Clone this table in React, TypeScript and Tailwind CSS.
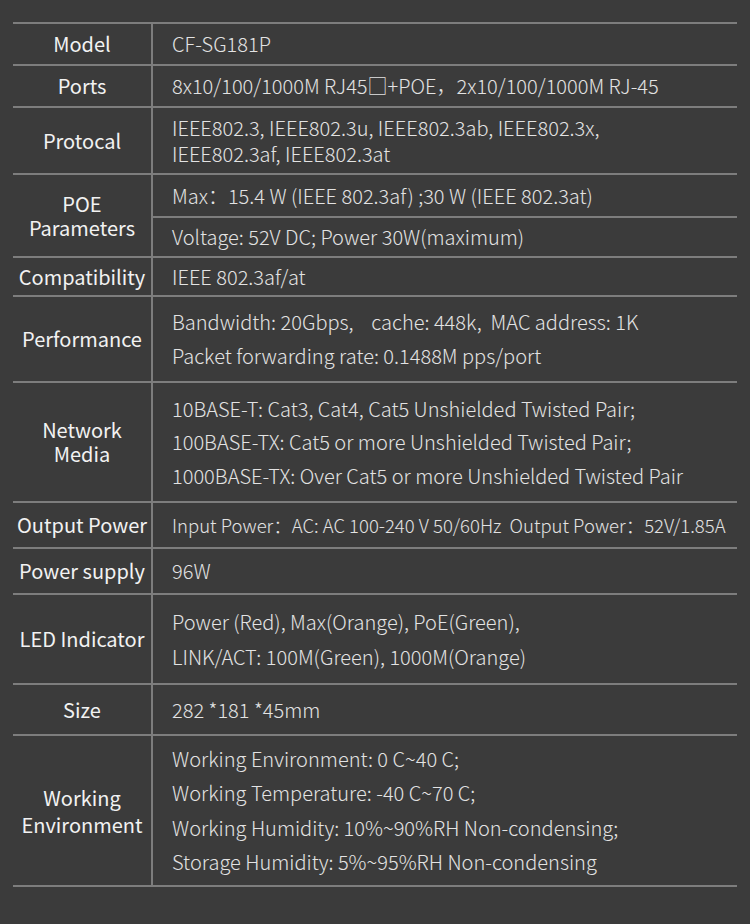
type Spec = {
  label: string[]
  lines: string[]
  h: string
  lh: string
  size?: string
  labelLh?: string
}

const specs: Spec[] = [
  { label: ["Model"], lines: ["CF-SG181P"], h: "h-[42px]", lh: "leading-[26px]" },
  {
    label: ["Ports"],
    lines: ["8x10/100/1000M RJ45□+POE，2x10/100/1000M RJ-45"],
    h: "h-[42px]",
    lh: "leading-[26px]",
  },
  {
    label: ["Protocal"],
    lines: ["IEEE802.3, IEEE802.3u, IEEE802.3ab, IEEE802.3x,", "IEEE802.3af, IEEE802.3at"],
    h: "h-[67px]",
    lh: "leading-[26px]",
  },
]

const specs2: Spec[] = [
  { label: ["Compatibility"], lines: ["IEEE 802.3af/at"], h: "h-[39px]", lh: "leading-[26px]" },
  {
    label: ["Performance"],
    lines: ["Bandwidth: 20Gbps,    cache: 448k,  MAC address: 1K", "Packet forwarding rate: 0.1488M pps/port"],
    h: "h-[86px]",
    lh: "leading-[34px]",
  },
  {
    label: ["Network", "Media"],
    lines: [
      "10BASE-T: Cat3, Cat4, Cat5 Unshielded Twisted Pair;",
      "100BASE-TX: Cat5 or more Unshielded Twisted Pair;",
      "1000BASE-TX: Over Cat5 or more Unshielded Twisted Pair",
    ],
    h: "h-[120px]",
    lh: "leading-[33.5px]",
  },
  {
    label: ["Output Power"],
    lines: ["Input Power：AC: AC 100-240 V 50/60Hz  Output Power：52V/1.85A"],
    h: "h-[46px]",
    lh: "leading-[26px]",
    size: "text-[18.5px]",
  },
  { label: ["Power supply"], lines: ["96W"], h: "h-[46px]", lh: "leading-[26px]" },
  {
    label: ["LED Indicator"],
    lines: ["Power (Red), Max(Orange), PoE(Green),", "LINK/ACT: 100M(Green), 1000M(Orange)"],
    h: "h-[90px]",
    lh: "leading-[35px]",
  },
  { label: ["Size"], lines: ["282 *181 *45mm"], h: "h-[51px]", lh: "leading-[26px]" },
  {
    label: ["Working", "Environment"],
    lines: [
      "Working Environment: 0 C~40 C;",
      "Working Temperature: -40 C~70 C;",
      "Working Humidity: 10%~90%RH Non-condensing;",
      "Storage Humidity: 5%~95%RH Non-condensing",
    ],
    h: "h-[151px]",
    lh: "leading-[34.5px]",
    labelLh: "leading-[27px]",
  },
]

function Label({ label, lh }: { label: string[]; lh?: string }) {
  return (
    <div className="w-[140px] shrink-0 border-r-2 border-[#7d7d7d] flex items-center justify-center">
      <p className={`text-center text-[20px] text-[#f2f2f2] whitespace-nowrap ${lh ?? "leading-[24px]"}`}>
        {label.map((l, i) => (
          <span key={l}>
            {i > 0 && <br />}
            {l}
          </span>
        ))}
      </p>
    </div>
  )
}

// values use the lighter cut when it exists
const light = { fontFamily: '"Noto Sans CJK SC Light", "Noto Sans CJK SC", "Noto Sans", sans-serif' }

function Row({ spec }: { spec: Spec }) {
  return (
    <div className={`flex border-t-2 border-[#7d7d7d] ${spec.h}`}>
      <Label label={spec.label} lh={spec.labelLh} />
      <div
        className={`flex-1 flex flex-col justify-center pl-[19px] font-light text-[#e3e3e3] whitespace-pre ${spec.size ?? "text-[20px]"} ${spec.lh}`}
        style={light}
      >
        {spec.lines.map((l) => (
          <span key={l}>{l}</span>
        ))}
      </div>
    </div>
  )
}

export default function App() {
  return (
    <div
      className="w-[750px] h-[924px] bg-[#3b3b3b] pt-[22px] px-[13px]"
      style={{ fontFamily: '"Noto Sans CJK SC", "Noto Sans", sans-serif' }}
    >
      <div className="w-[724px] border-b-2 border-[#7d7d7d]">
        {specs.map((s) => (
          <Row key={s.label.join(" ")} spec={s} />
        ))}

        <div className="flex border-t-2 border-[#7d7d7d] h-[83px]">
          <Label label={["POE", "Parameters"]} />
          <div className="flex-1 flex flex-col text-[20px] font-light text-[#e3e3e3]" style={light}>
            <div className="h-[41px] flex items-center pl-[19px]">
              Max：15.4 W (IEEE 802.3af) ;30 W (IEEE 802.3at)
            </div>
            <div className="flex-1 flex items-center pl-[19px] border-t-2 border-[#7d7d7d]">
              Voltage: 52V DC; Power 30W(maximum)
            </div>
          </div>
        </div>

        {specs2.map((s) => (
          <Row key={s.label.join(" ")} spec={s} />
        ))}
      </div>
    </div>
  )
}
